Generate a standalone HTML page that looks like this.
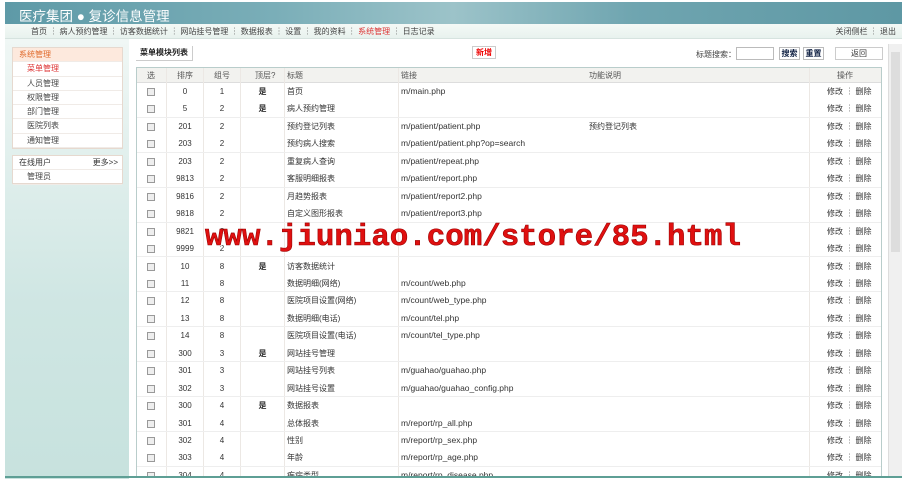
<!DOCTYPE html>
<html><head><meta charset="utf-8"><style>
*{margin:0;padding:0;box-sizing:border-box}
body{width:907px;height:483px;overflow:hidden;background:#fff;font-family:"Liberation Sans","Noto Sans CJK SC",sans-serif;font-size:8px;color:#333;position:relative}
.abs{position:absolute}
#hdr{left:5px;top:2px;width:897px;height:22px;background:linear-gradient(90deg,#5e9aa7,#7aaeb8 30%,#9cc3c9 50%,#6fa5b0 70%,#5e98a4);}
#hdr span{position:absolute;left:14px;top:3px;color:#fff;font-size:13.5px}
#nav{left:5px;top:24px;width:897px;height:15px;background:linear-gradient(#f4f9f6,#e8f2ee);border-bottom:1px solid #d6e3df;font-size:8px;line-height:15px;color:#444}
#side{left:5px;top:39px;width:124px;height:440px;background:linear-gradient(#f0f7f5,#cfe6e3 60%,#c7e2de)}
.box{position:absolute;left:7px;width:111px;background:#fff;border:1px solid #e6d9cf}
.box div{height:14.3px;line-height:14.3px;padding-left:14px;border-bottom:1px solid #f0ebe7;color:#444}
#tbl{left:136px;top:67px;width:746px;height:410px;border:1px solid #b9cdcb;border-bottom:none;overflow:hidden}
.row{position:absolute;left:0;width:746px;height:17.45px;line-height:17.45px}
.row span{position:absolute;top:0}
.cb{width:8px;height:8px;border:1px solid #999;background:#eee;display:inline-block;margin-top:5px}
.vl{position:absolute;top:0;height:410px;width:1px;background:#ece8e4}
</style></head><body>
<div class="abs" id="hdr"><span>医疗集团 ● 复诊信息管理</span></div>
<div class="abs" id="nav"><span style="position:absolute;left:26px">首页 ┆ 病人预约管理 ┆ 访客数据统计 ┆ 网站挂号管理 ┆ 数据报表 ┆ 设置 ┆ 我的资料 ┆ <span style="color:#d33">系统管理</span> ┆ 日志记录</span><span style="position:absolute;right:6px">关闭侧栏 ┆ 退出</span></div>
<div class="abs" id="side">
<div class="box" style="top:8px;height:102px">
<div style="background:#fde9dd;color:#e06a2c;padding-left:6px">系统管理</div>
<div style="color:#d33">菜单管理</div><div>人员管理</div><div>权限管理</div><div>部门管理</div><div>医院列表</div><div>通知管理</div></div>
<div class="box" style="top:116px;height:29px">
<div style="padding-left:6px;color:#333">在线用户<span style="float:right;margin-right:4px">更多&gt;&gt;</span></div><div>管理员</div></div>
</div>
<div class="abs" style="left:136px;top:46px;width:57px;height:15px;border:1px solid #ccc;border-top:none;border-left:none;font-weight:bold;line-height:14px;padding-left:4px;color:#222">菜单模块列表</div>
<div class="abs" style="left:472px;top:46px;width:24px;height:13px;border:1px solid #ccc;color:#e00;font-weight:bold;text-align:center;line-height:12px">新增</div>
<div class="abs" style="left:696px;top:49px;color:#444">标题搜索：</div>
<div class="abs" style="left:736px;top:47px;width:38px;height:13px;border:1px solid #bbb"></div>
<div class="abs" style="left:779px;top:47px;width:21px;height:13px;border:1px solid #bbb;font-weight:bold;text-align:center;line-height:12px;color:#124">搜索</div>
<div class="abs" style="left:803px;top:47px;width:21px;height:13px;border:1px solid #bbb;font-weight:bold;text-align:center;line-height:12px;color:#124">重置</div>
<div class="abs" style="left:835px;top:47px;width:48px;height:13px;border:1px solid #ccc;text-align:center;line-height:12px">返回</div>
<div class="abs" style="left:888px;top:44px;width:14px;height:433px;background:#f0f0f0;border-left:1px solid #ddd"><div style="margin:8px 2px;height:200px;background:#ddd"></div></div>
<div class="abs" id="tbl">
<div class="row" style="top:0;height:15px;line-height:15px;background:#f2f2ef;border-bottom:1px solid #ddd;color:#555">
<span style="left:10px">选</span><span style="left:40px">排序</span><span style="left:77px">组号</span><span style="left:118px">顶层?</span><span style="left:150px">标题</span><span style="left:264px">链接</span><span style="left:452px">功能说明</span><span style="left:700px">操作</span></div>
<div class="vl" style="left:29px"></div><div class="vl" style="left:66px"></div><div class="vl" style="left:103px"></div><div class="vl" style="left:147px"></div><div class="vl" style="left:261px"></div><div class="vl" style="left:672px"></div>
<div id="rows"></div>
</div>
<div class="abs" style="left:5px;top:476px;width:897px;height:2px;background:#5e9f95"></div>
<div class="abs" style="left:205px;top:220px;font-family:'Liberation Mono',monospace;font-weight:bold;font-size:30.8px;color:#e01010;-webkit-text-stroke:0.6px #900;text-shadow:1px 1px 0 #fff">www.jiuniao.com/store/85.html</div>
<script>
var d=[["0","1","是","首页","m/main.php",""],["5","2","是","病人预约管理","",""],["201","2","","预约登记列表","m/patient/patient.php","预约登记列表"],["203","2","","预约病人搜索","m/patient/patient.php?op=search",""],["203","2","","重复病人查询","m/patient/repeat.php",""],["9813","2","","客服明细报表","m/patient/report.php",""],["9816","2","","月趋势报表","m/patient/report2.php",""],["9818","2","","自定义图形报表","m/patient/report3.php",""],["9821","2","","","",""],["9999","2","","","",""],["10","8","是","访客数据统计","",""],["11","8","","数据明细(网络)","m/count/web.php",""],["12","8","","医院项目设置(网络)","m/count/web_type.php",""],["13","8","","数据明细(电话)","m/count/tel.php",""],["14","8","","医院项目设置(电话)","m/count/tel_type.php",""],["300","3","是","网站挂号管理","",""],["301","3","","网站挂号列表","m/guahao/guahao.php",""],["302","3","","网站挂号设置","m/guahao/guahao_config.php",""],["300","4","是","数据报表","",""],["301","4","","总体报表","m/report/rp_all.php",""],["302","4","","性别","m/report/rp_sex.php",""],["303","4","","年龄","m/report/rp_age.php",""],["304","4","","疾病类型","m/report/rp_disease.php",""]];
var h="";d.forEach(function(r,i){var t=15+i*17.45;h+='<div class="row" style="top:'+t+'px;'+(i%2==1?'border-bottom:1px solid #eee':'')+'"><span style="left:10px"><i class="cb"></i></span><span style="left:30px;width:36px;text-align:center">'+r[0]+'</span><span style="left:67px;width:36px;text-align:center">'+r[1]+'</span><span style="left:104px;width:43px;text-align:center;font-weight:bold">'+r[2]+'</span><span style="left:150px">'+r[3]+'</span><span style="left:264px;font-size:8.5px">'+r[4]+'</span><span style="left:452px">'+r[5]+'</span><span style="left:690px">修改 ┆ 删除</span></div>'});
document.getElementById("rows").innerHTML=h;
</script>
</body></html>
